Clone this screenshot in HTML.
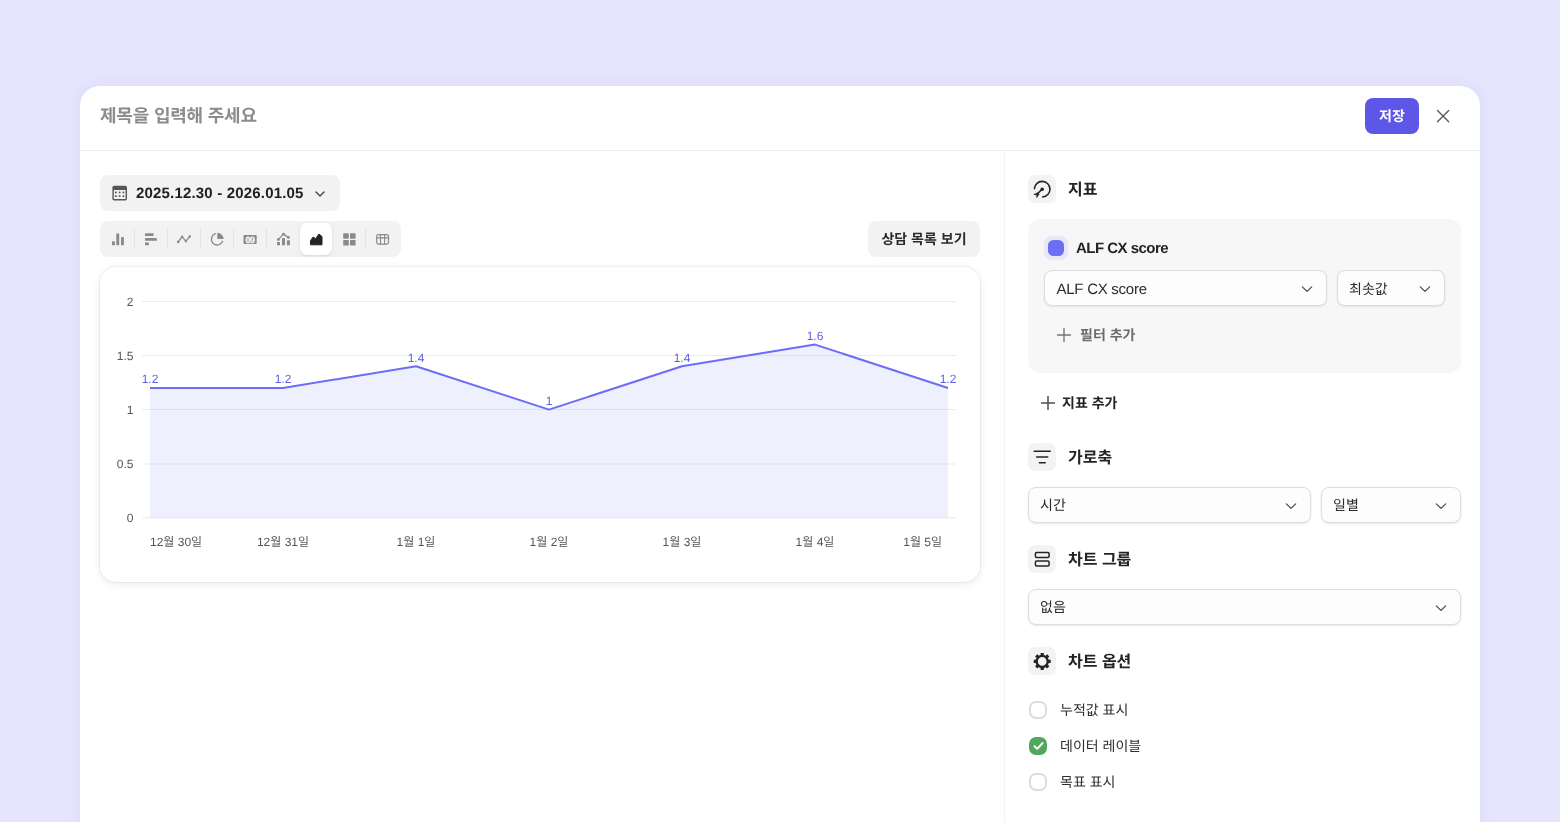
<!DOCTYPE html>
<html lang="ko">
<head>
<meta charset="utf-8">
<title>차트 편집</title>
<style>
*{box-sizing:border-box;margin:0;padding:0}
html,body{width:1560px;height:822px;overflow:hidden}
body{background:#e5e5fe;font-family:"Liberation Sans","Noto Sans CJK KR",sans-serif;color:#242428;position:relative;-webkit-font-smoothing:antialiased;text-rendering:geometricPrecision}
.abs{position:absolute}
.modal{will-change:transform;position:absolute;left:80px;top:86px;width:1400px;height:800px;background:#fff;border-radius:20px;box-shadow:0 0 14px rgba(140,140,225,.11)}
.hdr{position:absolute;left:0;top:0;width:1400px;height:65px;border-bottom:1px solid #ececec}
.title{position:absolute;left:20px;top:16px;height:30px;line-height:29px;font-size:18px;letter-spacing:-.2px;font-weight:700;color:#8c8c8c;white-space:nowrap}
.save{position:absolute;left:1285px;top:12px;width:54px;height:36px;border-radius:8px;background:#5e56e6;color:#fff;font-size:14px;font-weight:700;text-align:center;line-height:36.5px}
.close{position:absolute;left:1355px;top:22px;width:16px;height:16px}
.vdiv{position:absolute;left:924px;top:65px;width:1px;height:740px;background:#f2f2f2}
.pill{position:absolute;background:#f2f2f2;border-radius:8px}
.date{left:20px;top:89px;width:240px;height:36px}
.date .txt{position:absolute;left:36px;top:1.2px;line-height:36px;font-size:15px;letter-spacing:.18px;font-weight:700;color:#1f1f23;white-space:nowrap}
.tools{left:20px;top:135px;width:301px;height:36px}
.tools .sep{position:absolute;top:8px;width:1px;height:20px;background:#e2e2e2}
.tools .act{position:absolute;left:200px;top:2px;width:32px;height:32px;border-radius:7px;background:#fff;box-shadow:0 1px 3px rgba(0,0,0,.12)}
.tools svg{position:absolute;top:10px;width:16px;height:16px}
.listbtn{left:788px;top:135px;width:112px;height:36px;text-align:center;line-height:37px;font-size:14px;font-weight:700;color:#2a2a2e;white-space:nowrap}
.card{position:absolute;left:20px;top:181px;width:880px;height:315px;border-radius:16px;background:#fff;box-shadow:0 0 0 1px rgba(0,0,0,.035),0 0 2px rgba(0,0,0,.06),0 2px 8px rgba(0,0,0,.085)}
.chart{position:absolute;left:0;top:0}
.sec-ico{position:absolute;left:948px;width:28px;height:28px;border-radius:7px;background:#f3f3f3}
.sec-ico svg{position:absolute;left:4px;top:4px;width:20px;height:20px}
.sec-t{position:absolute;left:988px;height:28px;line-height:31px;font-size:16px;font-weight:700;color:#242428;white-space:nowrap}
.mcard{position:absolute;left:948px;top:133px;width:433px;height:154px;border-radius:12px;background:#f7f7f7}
.sel{position:absolute;height:36px;border-radius:8px;background:#fdfdfd;border:1px solid #dcdcdc;box-shadow:0 1px 2px rgba(0,0,0,.09);font-size:14px;color:#2a2a2e;line-height:34px;padding-left:11px;white-space:nowrap}
.sel svg{position:absolute;right:13.2px;top:11.6px;width:12px;height:12px}
.plus{position:absolute;width:14px;height:14px}
.lbl{position:absolute;white-space:nowrap;font-size:14px}
.cb{position:absolute;left:949px;width:18px;height:18px;border-radius:7px;border:2px solid #dcdcdc;background:#fff}
.cb.on{background:#4fa85b;border-color:#4fa85b}
.cbl{position:absolute;left:980px;font-size:14px;line-height:20px;color:#2e2e32;white-space:nowrap}
</style>
</head>
<body>
<div class="modal">
  <div class="hdr">
    <div class="title">제목을 입력해 주세요</div>
    <div class="save">저장</div>
    <svg class="close" viewBox="0 0 16 16"><path d="M2.5 2.5 L13.7 13.7 M13.7 2.5 L2.5 13.7" stroke="#5e5e5e" stroke-width="1.4" stroke-linecap="round" fill="none"/></svg>
  </div>
  <div class="vdiv"></div>

  <!-- left column -->
  <div class="pill date">
    <div class="txt">2025.12.30 - 2026.01.05</div>
    <svg class="abs" style="left:214px;top:13px;width:12px;height:12px" viewBox="0 0 12 12"><path d="M2 4 L6 8 L10 4" stroke="#444" stroke-width="1.4" fill="none" stroke-linecap="round" stroke-linejoin="round"/></svg>
  </div>

  <div class="pill tools">
    <div class="act"></div>
    <div class="sep" style="left:34px"></div><div class="sep" style="left:67px"></div><div class="sep" style="left:100px"></div><div class="sep" style="left:133px"></div><div class="sep" style="left:166px"></div><div class="sep" style="left:265px"></div>
  </div>
  <!-- toolbar icons drawn in page coordinates -->
  <svg class="abs" style="left:0;top:0;width:1400px;height:736px" viewBox="80 86 1400 736">
    <!-- calendar -->
    <rect x="112.4" y="185.8" width="14.6" height="14.6" rx="1.7" fill="#555"/>
    <rect x="113.8" y="190" width="11.8" height="9" rx=".6" fill="#f2f2f2"/>
    <g fill="#555"><rect x="115" y="191.6" width="1.7" height="1.7"/><rect x="118.8" y="191.6" width="1.7" height="1.7"/><rect x="122.6" y="191.6" width="1.7" height="1.7"/><rect x="115" y="195.3" width="1.7" height="1.7"/><rect x="118.8" y="195.3" width="1.7" height="1.7"/><rect x="122.6" y="195.3" width="1.7" height="1.7"/></g>
    <g fill="#8a8a8a">
      <!-- bar -->
      <rect x="112" y="241.3" width="2.9" height="3.9" rx=".4"/><rect x="116.3" y="233.4" width="2.9" height="11.8" rx=".4"/><rect x="121" y="237" width="2.9" height="8.2" rx=".4"/>
      <!-- hbar -->
      <rect x="145" y="233.3" width="8.6" height="2.8" rx=".4"/><rect x="145" y="238" width="11.9" height="2.8" rx=".4"/><rect x="145" y="242.4" width="3.9" height="2.8" rx=".4"/>
      <!-- number -->
      <rect x="243.5" y="234.9" width="13.2" height="9.1" rx="1.3"/>
      <!-- combo bars -->
      <rect x="277" y="242.1" width="3" height="3.2" rx=".3"/><rect x="282" y="238" width="3" height="7.3" rx=".3"/><rect x="286.9" y="240.2" width="3" height="5.1" rx=".3"/>
      <!-- grid -->
      <rect x="343.2" y="233.3" width="5.6" height="5.5" rx=".7"/><rect x="350" y="233.3" width="5.6" height="5.5" rx=".7"/><rect x="343.2" y="239.9" width="5.6" height="5.5" rx=".7"/><rect x="350" y="239.9" width="5.6" height="5.5" rx=".7"/>
    </g>
    <text x="250.1" y="242.6" text-anchor="middle" font-family="Liberation Sans, sans-serif" font-weight="700" font-size="9" fill="#f2f2f2" stroke="#f2f2f2" stroke-width=".4" letter-spacing="-.3">09</text>
    <!-- line -->
    <g stroke="#8a8a8a" fill="none" stroke-width="1.3" stroke-linejoin="round" stroke-linecap="round">
      <path d="M178.1 242 L182.1 236.9 L185.9 241.1 L189.7 236.6"/>
      <path d="M278.3 239.6 L283.4 234.1 L288.4 237.4"/>
      <!-- pie ring -->
      <path d="M215.3 233.7 A5.8 5.8 0 1 0 222.6 241.3" stroke-width="1.4"/>
      <!-- table -->
      <rect x="376.7" y="234.6" width="11.8" height="9.5" rx="1.8" stroke-width="1.2"/>
      <path d="M380.5 234.6 V244.1 M384.6 234.6 V244.1 M376.7 237.9 H388.5" stroke-width="1.1"/>
    </g>
    <g fill="#8a8a8a">
      <circle cx="178.1" cy="242" r="1.3"/><circle cx="182.1" cy="236.9" r="1.3"/><circle cx="185.9" cy="241.1" r="1.3"/><circle cx="189.7" cy="236.6" r="1.3"/>
      <circle cx="278.3" cy="239.6" r="1.4"/><circle cx="283.4" cy="234.1" r="1.4"/><circle cx="288.4" cy="237.4" r="1.4"/>
      <path d="M217.3 232.8 A6.3 6.3 0 0 1 223.6 239.1 L217.3 239.1 Z"/>
    </g>
    <!-- area (active) -->
    <path d="M310.5 240.5 L313.2 237 L315.6 238.7 L318.9 234 L322 236.5 V244.8 H310.5 Z" fill="#242424" stroke="#242424" stroke-width="1" stroke-linejoin="round"/>
  </svg>

  <div class="pill listbtn">상담 목록 보기</div>

  <div class="card"></div>
  <svg class="abs" style="left:0;top:0;width:1400px;height:736px" viewBox="80 86 1400 736" font-family="Liberation Sans, Noto Sans CJK KR, sans-serif">
    <g stroke="#ebebee" stroke-width="1" fill="none"><path d="M142 301.5 H956"/><path d="M142 355.5 H956"/><path d="M142 409.5 H956"/><path d="M142 464 H956"/><path d="M142 518 H956"/></g>
    <path d="M150 388.0 L283 388.0 L416 366.3 L549 409.6 L682 366.3 L815 344.6 L948 388.0 L948 518 L150 518 Z" fill="#6670f6" fill-opacity=".105"/>
    <path d="M150 388.0 L283 388.0 L416 366.3 L549 409.6 L682 366.3 L815 344.6 L948 388.0" fill="none" stroke="#6b6ef6" stroke-width="2" stroke-linejoin="round"/>
    <g font-size="12" fill="#555"><text x="133.5" y="305.9" text-anchor="end">2</text><text x="133.5" y="359.9" text-anchor="end">1.5</text><text x="133.5" y="414.09999999999997" text-anchor="end">1</text><text x="133.5" y="468.4" text-anchor="end">0.5</text><text x="133.5" y="522.4" text-anchor="end">0</text></g>
    <g font-size="12" fill="#5d5fe6"><text x="150" y="383.4" text-anchor="middle">1.2</text><text x="283" y="383.4" text-anchor="middle">1.2</text><text x="416" y="361.7" text-anchor="middle">1.4</text><text x="549" y="405.0" text-anchor="middle">1</text><text x="682" y="361.7" text-anchor="middle">1.4</text><text x="815" y="340.0" text-anchor="middle">1.6</text><text x="948" y="383.4" text-anchor="middle">1.2</text></g>
    <g font-size="12" fill="#555"><text x="150" y="546" text-anchor="start">12월 30일</text><text x="283" y="546" text-anchor="middle">12월 31일</text><text x="416" y="546" text-anchor="middle">1월 1일</text><text x="549" y="546" text-anchor="middle">1월 2일</text><text x="682" y="546" text-anchor="middle">1월 3일</text><text x="815" y="546" text-anchor="middle">1월 4일</text><text x="942" y="546" text-anchor="end">1월 5일</text></g>
  </svg>

  <!-- right column -->
  <div class="sec-ico" style="top:89px"></div>
  <div class="sec-t" style="top:89px">지표</div>
  <div class="mcard"></div>
  <div class="abs" style="left:964px;top:150px;width:24px;height:24px;border-radius:7px;background:#e8e8f9"></div>
  <div class="abs" style="left:968px;top:154px;width:16px;height:16px;border-radius:5.5px;background:#6c6ff6"></div>
  <div class="lbl" style="left:996px;top:152px;line-height:22px;font-size:15px;font-weight:700;letter-spacing:-.52px;color:#242428">ALF CX score</div>
  <div class="sel" style="left:964px;top:184px;width:283px;line-height:37px;font-size:15px;letter-spacing:-.26px;padding-left:11.5px">ALF CX score<svg viewBox="0 0 12 12"><path d="M1.3 3.9 L6 8.4 L10.7 3.9" stroke="#4e4e52" stroke-width="1.3" fill="none" stroke-linecap="round" stroke-linejoin="round"/></svg></div>
  <div class="sel" style="left:1257px;top:184px;width:108px;line-height:36px">최솟값<svg viewBox="0 0 12 12"><path d="M1.3 3.9 L6 8.4 L10.7 3.9" stroke="#4e4e52" stroke-width="1.3" fill="none" stroke-linecap="round" stroke-linejoin="round"/></svg></div>
  <svg class="plus" style="left:977.3px;top:241.7px" viewBox="0 0 14 14"><path d="M7 .4 V13.6 M.4 7 H13.6" stroke="#767678" stroke-width="1.4" stroke-linecap="round" fill="none"/></svg>
  <div class="lbl" style="left:1000px;top:239.2px;line-height:20px;font-weight:700;color:#6c6c70">필터 추가</div>
  <svg class="plus" style="left:961.1px;top:309.5px" viewBox="0 0 14 14"><path d="M7 .4 V13.6 M.4 7 H13.6" stroke="#4c4c50" stroke-width="1.5" stroke-linecap="round" fill="none"/></svg>
  <div class="lbl" style="left:982px;top:307.2px;line-height:20px;font-weight:700;color:#242428">지표 추가</div>

  <div class="sec-ico" style="top:357px"></div>
  <div class="sec-t" style="top:357px">가로축</div>
  <div class="sel" style="left:948px;top:401px;width:283px">시간<svg viewBox="0 0 12 12"><path d="M1.3 3.9 L6 8.4 L10.7 3.9" stroke="#4e4e52" stroke-width="1.3" fill="none" stroke-linecap="round" stroke-linejoin="round"/></svg></div>
  <div class="sel" style="left:1241px;top:401px;width:140px">일별<svg viewBox="0 0 12 12"><path d="M1.3 3.9 L6 8.4 L10.7 3.9" stroke="#4e4e52" stroke-width="1.3" fill="none" stroke-linecap="round" stroke-linejoin="round"/></svg></div>

  <div class="sec-ico" style="top:459px"></div>
  <div class="sec-t" style="top:459px">차트 그룹</div>
  <div class="sel" style="left:948px;top:503px;width:433px">없음<svg viewBox="0 0 12 12"><path d="M1.3 3.9 L6 8.4 L10.7 3.9" stroke="#4e4e52" stroke-width="1.3" fill="none" stroke-linecap="round" stroke-linejoin="round"/></svg></div>

  <div class="sec-ico" style="top:561px"></div>
  <div class="sec-t" style="top:561px">차트 옵션</div>
  <div class="cb" style="top:614.5px"></div><div class="cbl" style="top:614px">누적값 표시</div>
  <div class="cb on" style="top:650.5px"></div><div class="cbl" style="top:650px">데이터 레이블</div>
  <div class="cb" style="top:686.5px"></div><div class="cbl" style="top:686px">목표 표시</div>

  <!-- section icons in page coordinates -->
  <svg class="abs" style="left:0;top:0;width:1400px;height:736px" viewBox="80 86 1400 736">
    <g stroke="#242428" fill="none" stroke-width="1.6" stroke-linecap="round" stroke-linejoin="round">
      <!-- target -->
      <path d="M1034.4 188.6 A7.8 7.8 0 1 1 1042.6 197"/>
      <path d="M1042.1 189.2 L1037.4 193.9"/>
      <!-- filter -->
      <path d="M1034.2 451.2 H1050.2 M1036.7 457 H1047.7 M1039.4 462.8 H1045.2"/>
      <!-- group -->
      <rect x="1035.4" y="552.6" width="13.7" height="4.9" rx="1.2" stroke-width="1.5"/>
      <rect x="1035.4" y="561" width="13.7" height="4.9" rx="1.2" stroke-width="1.5"/>
      <!-- gear -->
      <circle cx="1042.2" cy="661.4" r="5.55" stroke-width="2.4"/>
      <g stroke-width="3.2" stroke-linecap="butt">
        <path d="M1042.2 655.4 V652.9 M1042.2 667.4 V669.9 M1036.2 661.4 H1033.7 M1048.2 661.4 H1050.7"/>
        <path d="M1046.44 657.16 L1048.21 655.39 M1037.96 665.64 L1036.19 667.41 M1037.96 657.16 L1036.19 655.39 M1046.44 665.64 L1048.21 667.41"/>
      </g>
      <!-- check -->
      <path d="M1034.5 746.3 L1037.2 748.9 L1042.5 743.1" stroke="#fff" stroke-width="2"/>
    </g>
    <g fill="#242428">
      <circle cx="1042.2" cy="189.2" r="1.8"/>
      <path d="M1033.8 194.5 L1037.7 192.8 L1039.1 194.2 L1036.7 197.7 L1036.9 195 Z" stroke="#242428" stroke-width=".6" stroke-linejoin="round"/>
    </g>
  </svg>

</div>
</body>
</html>
